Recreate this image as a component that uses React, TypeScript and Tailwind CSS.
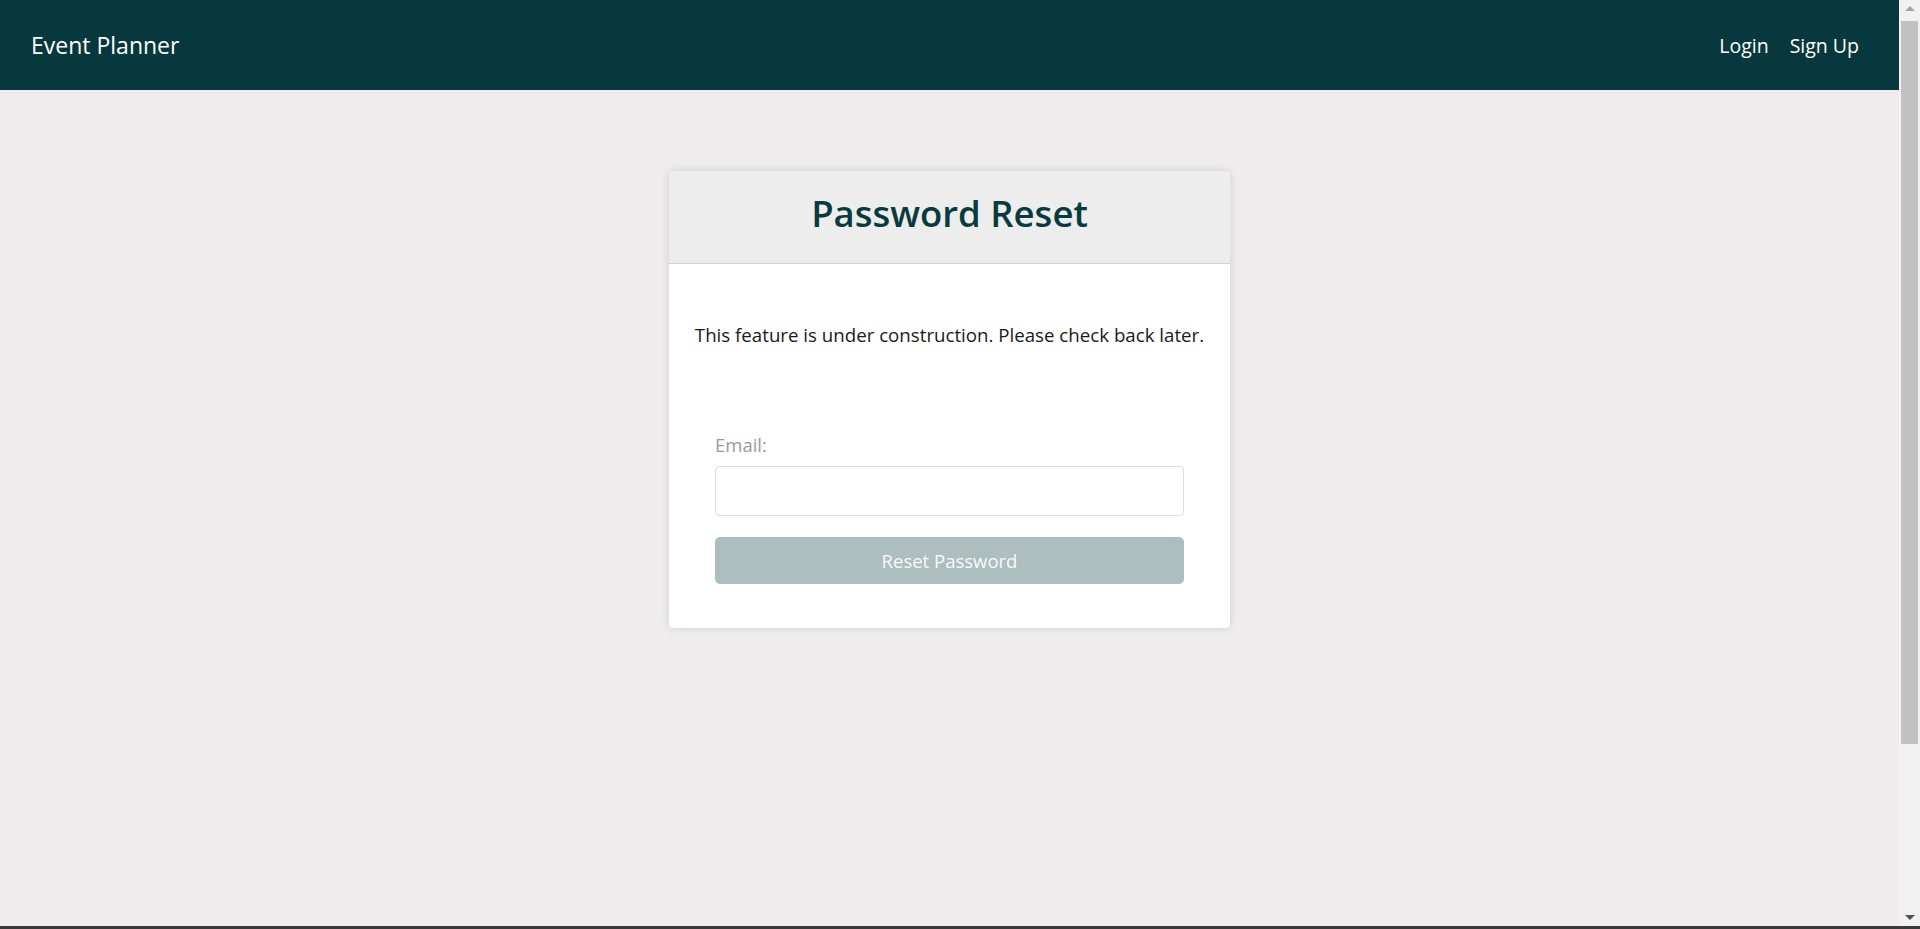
function Scrollbar() {
  return (
    <div className="w-[21px] shrink-0 bg-[#f1f1f1] flex flex-col items-center">
      <div className="h-[17px] flex items-center justify-center">
        <div className="w-0 h-0 border-l-[5px] border-r-[5px] border-b-[5px] border-l-transparent border-r-transparent border-b-[#a3a3a3]" />
      </div>
      <div className="w-[17px] h-[723px] mt-[4px] bg-[#c1c1c1]" />
      <div className="flex-1" />
      <div className="h-[17px] flex items-center justify-center">
        <div className="w-0 h-0 border-l-[5px] border-r-[5px] border-t-[5px] border-l-transparent border-r-transparent border-t-[#505050]" />
      </div>
    </div>
  );
}

export default function App() {
  return (
    <div className="h-screen flex flex-col bg-[#eeecec] font-['Open_Sans',sans-serif]">
      <div className="flex-1 flex min-h-0">
        <div className="flex-1 min-w-0 overflow-hidden">
          {/* Navbar */}
          <nav className="h-[90px] bg-[#07383d] flex items-center justify-between pl-[31px] pr-[40px] text-white">
            <a href="#" className="text-[23px] leading-none">Event Planner</a>
            <div className="flex items-center gap-[21px] text-[19.5px] leading-none pt-[2px]">
              <a href="#">Login</a>
              <a href="#">Sign Up</a>
            </div>
          </nav>

          {/* Card */}
          <main className="flex justify-center pt-[81px]">
            <div className="w-[561px] bg-white rounded-[4px] shadow-[0_0_10px_rgba(0,0,0,0.12)] overflow-hidden">
              <div className="h-[93px] bg-[#ededed] border-b border-[#d4d4d4] flex items-center justify-center">
                <h1 className="text-[36.5px] font-semibold text-[#073b40] leading-none pb-[8px]">Password Reset</h1>
              </div>

              <div className="pt-[56px] pb-[44px]">
                <p className="text-center text-[18.7px] leading-[30px] text-[#1a1a1a]">
                  This feature is under construction. Please check back later.
                </p>

                <form className="px-[46px] mt-[80px] flex flex-col" onSubmit={(e) => e.preventDefault()}>
                  <label className="text-[18.5px] leading-[30px] text-[#9a9a9a]">Email:</label>
                  <input
                    type="email"
                    className="mt-[6px] h-[50px] w-full rounded-[4px] border border-[#dddddd] px-3 outline-none"
                  />
                  <button
                    type="submit"
                    className="mt-[21px] h-[47px] w-full rounded-[5px] bg-[#adbebe] text-white/95 text-[18.5px]"
                  >
                    Reset Password
                  </button>
                </form>
              </div>
            </div>
          </main>
        </div>
        <Scrollbar />
      </div>
      <div className="h-[3px] bg-[#3a3a3a]" />
    </div>
  );
}
